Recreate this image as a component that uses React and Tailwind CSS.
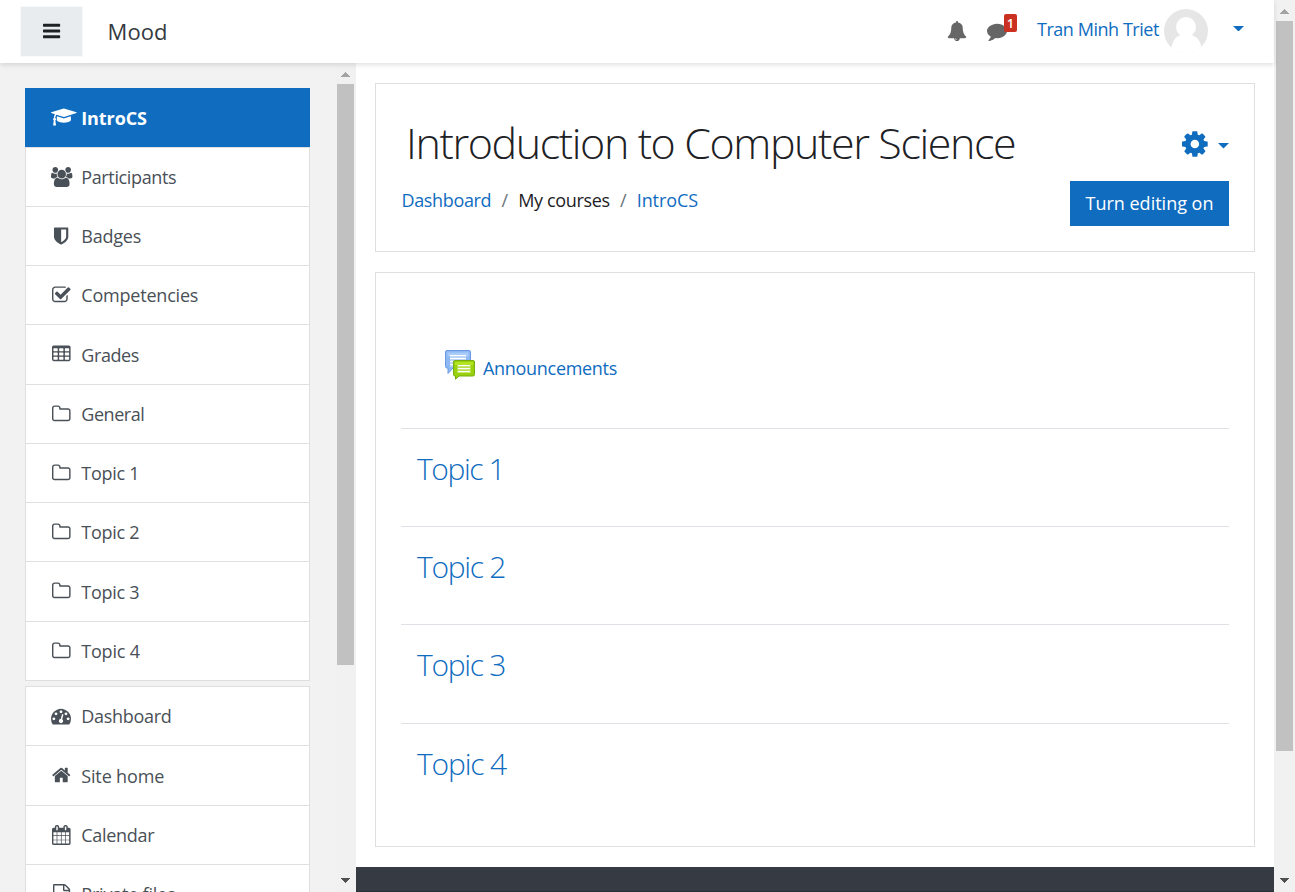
const ICONS = {
  bars: { w: 1536, d: "M1536 1344v128q0 26-19 45t-45 19h-1408q-26 0-45-19t-19-45v-128q0-26 19-45t45-19h1408q26 0 45 19t19 45zM1536 832v128q0 26-19 45t-45 19h-1408q-26 0-45-19t-19-45v-128q0-26 19-45t45-19h1408q26 0 45 19t19 45zM1536 320v128q0 26-19 45t-45 19h-1408q-26 0-45-19t-19-45v-128q0-26 19-45t45-19h1408q26 0 45 19t19 45z" },
  cap: { w: 2304, d: "M1774 836l18 316q4 69-82 128t-235 93.500-323 34.500-323-34.500-235-93.500-82-128l18-316 574 181q22 7 48 7t48-7zM2304 512q0 23-22 31l-1120 352q-4 1-10 1t-10-1l-652-206q-43 34-71 111.500t-34 178.500q63 36 63 109 0 69-58 107l58 433q2 14-8 25-9 11-24 11h-192q-15 0-24-11-10-11-8-25l58-433q-58-38-58-107 0-73 65-111 11-207 98-330l-333-104q-22-8-22-31t22-31l1120-352q4-1 10-1t10 1l1120 352q22 8 22 31z" },
  users: { w: 1920, d: "M593 896q-162 5-265 128h-134q-82 0-138-40.500t-56-118.500q0-353 124-353 6 0 43.500 21t97.500 42.500 119 21.500q67 0 133-23-5 37-5 66 0 139 81 256zM1664 1533q0 120-73 189.500t-194 69.500h-874q-121 0-194-69.500t-73-189.500q0-53 3.500-103.500t14-109 26.500-108.500 43-97.500 62-81 85.500-53.500 111.500-20q10 0 43 21.500t73 48 107 48 135 21.500 135-21.500 107-48 73-48 43-21.500q61 0 111.500 20t85.500 53.500 62 81 43 97.500 26.500 108.500 14 109 3.500 103.500zM640 256q0 106-75 181t-181 75-181-75-75-181 75-181 181-75 181 75 75 181zM1344 640q0 159-112.500 271.500t-271.500 112.500-271.500-112.500-112.500-271.500 112.500-271.500 271.500-112.500 271.500 112.500 112.500 271.500zM1920 865q0 78-56 118.500t-138 40.500h-134q-103-123-265-128 81-117 81-256 0-29-5-66 66 23 133 23 59 0 119-21.500t97.500-42.500 43.500-21q124 0 124 353zM1792 256q0 106-75 181t-181 75-181-75-75-181 75-181 181-75 181 75 75 181z" },
  shield: { w: 1280, x: 256, d: "M1344 960v-640h-448v1137q119-63 213-137 235-184 235-360zM1536 192v768q0 86-33.500 170.500t-83 150-118 127.500-126.500 103-121 77.500-89.500 49.500-42.500 20q-12 6-26 6t-26-6q-16-7-42.500-20t-89.500-49.500-121-77.500-126.500-103-118-127.500-83-150-33.500-170.500v-768q0-26 19-45t45-19h1152q26 0 45 19t19 45z" },
  check: { w: 1664, x: 64, d: "M1472 930v318q0 119-84.500 203.500t-203.500 84.500h-832q-119 0-203.500-84.500t-84.500-203.500v-832q0-119 84.500-203.500t203.500-84.500h832q63 0 117 25 15 7 18 23 3 17-9 29l-49 49q-10 10-23 10-3 0-9-2-23-6-45-6h-832q-66 0-113 47t-47 113v832q0 66 47 113t113 47h832q66 0 113-47t47-113v-254q0-13 9-22l64-64q10-10 23-10 6 0 12 3 20 8 20 29zM1703 441l-814 814q-24 24-57 24t-57-24l-430-430q-24-24-24-57t24-57l110-110q24-24 57-24t57 24l263 263 647-647q24-24 57-24t57 24l110 110q24 24 24 57t-24 57z" },
  table: { w: 1664, d: "M160 128h1344q66 0 113 47t47 113v1088q0 66-47 113t-113 47h-1344q-66 0-113-47t-47-113v-1088q0-66 47-113t113-47zM128 416v192q0 32 32 32h320q32 0 32-32v-192q0-32-32-32h-320q-32 0-32 32zM128 800v192q0 32 32 32h320q32 0 32-32v-192q0-32-32-32h-320q-32 0-32 32zM128 1184v192q0 32 32 32h320q32 0 32-32v-192q0-32-32-32h-320q-32 0-32 32zM640 416v192q0 32 32 32h320q32 0 32-32v-192q0-32-32-32h-320q-32 0-32 32zM640 800v192q0 32 32 32h320q32 0 32-32v-192q0-32-32-32h-320q-32 0-32 32zM640 1184v192q0 32 32 32h320q32 0 32-32v-192q0-32-32-32h-320q-32 0-32 32zM1152 416v192q0 32 32 32h320q32 0 32-32v-192q0-32-32-32h-320q-32 0-32 32zM1152 800v192q0 32 32 32h320q32 0 32-32v-192q0-32-32-32h-320q-32 0-32 32zM1152 1184v192q0 32 32 32h320q32 0 32-32v-192q0-32-32-32h-320q-32 0-32 32z" },
  folder: { w: 1664, x: 64, d: "M1600 1312v-704q0-40-28-68t-68-28h-704q-40 0-68-28t-28-68v-64q0-40-28-68t-68-28h-320q-40 0-68 28t-28 68v960q0 40 28 68t68 28h1216q40 0 68-28t28-68zM1728 608v704q0 92-66 158t-158 66h-1216q-92 0-158-66t-66-158v-960q0-92 66-158t158-66h320q92 0 158 66t66 158v32h672q92 0 158 66t66 158z" },
  gauge: { w: 1792, d: "M384 1152q0-53-37.500-90.500t-90.500-37.500-90.500 37.500-37.500 90.500 37.500 90.500 90.500 37.500 90.500-37.500 37.500-90.500zM576 704q0-53-37.500-90.500t-90.500-37.500-90.500 37.500-37.500 90.500 37.500 90.500 90.500 37.500 90.500-37.500 37.500-90.500zM1004 1185l101-382q6-26-7.500-48.500t-38.500-29.500-48 6.500-30 39.500l-101 382q-60 5-107 43.500t-63 98.500q-20 77 20 146t117 89 146-20 89-117q16-60-6-117t-72-91zM1664 1152q0-53-37.500-90.500t-90.500-37.500-90.500 37.500-37.500 90.500 37.500 90.500 90.500 37.500 90.500-37.500 37.500-90.500zM1024 512q0-53-37.500-90.500t-90.500-37.500-90.500 37.500-37.500 90.500 37.500 90.500 90.500 37.500 90.500-37.500 37.500-90.500zM1472 704q0-53-37.500-90.500t-90.500-37.500-90.500 37.500-37.500 90.500 37.500 90.500 90.500 37.500 90.500-37.500 37.500-90.500zM1792 1152q0 261-141 483-19 29-54 29h-1402q-35 0-54-29-141-221-141-483 0-182 71-348t191-286 286-191 348-71 348 71 286 191 191 286 71 348z" },
  home: { w: 1664, x: 64, d: "M1472 992v480q0 26-19 45t-45 19h-384v-384h-256v384h-384q-26 0-45-19t-19-45v-480q0-1 .5-3t.5-3l575-474 575 474q1 2 1 6zM1695 923l-62 74q-8 9-21 11h-3q-13 0-21-7l-692-577-692 577q-12 8-24 7-13-2-21-11l-62-74q-8-10-7-23.500t11-21.500l719-599q32-26 76-26t76 26l244 204v-195q0-14 9-23t23-9h192q14 0 23 9t9 23v408l219 182q10 8 11 21.500t-7 23.500z" },
  calendar: { w: 1664, x: 64, d: "M192 1664h288v-288h-288v288zm352 0h320v-288h-320v288zm-352-352h288v-320h-288v320zm352 0h320v-320h-320v320zm-352-384h288v-288h-288v288zm736 736h320v-288h-320v288zm-384-736h320v-288h-320v288zm768 736h288v-288h-288v288zm-384-352h320v-320h-320v320zm-352-864v-288q0-13-9.500-22.500t-22.500-9.500h-64q-13 0-22.500 9.500t-9.500 22.500v288q0 13 9.500 22.500t22.500 9.500h64q13 0 22.500-9.500t9.500-22.500zm736 864h288v-320h-288v320zm-384-384h320v-288h-320v288zm384 0h288v-288h-288v288zm32-480v-288q0-13-9.500-22.500t-22.500-9.500h-64q-13 0-22.500 9.500t-9.500 22.500v288q0 13 9.500 22.500t22.500 9.500h64q13 0 22.500-9.500t9.500-22.500zm384-64v1280q0 52-38 90t-90 38h-1408q-52 0-90-38t-38-90v-1280q0-52 38-90t90-38h128v-96q0-66 47-113t113-47h64q66 0 113 47t47 113v96h384v-96q0-66 47-113t113-47h64q66 0 113 47t47 113v96h128q52 0 90 38t38 90z" },
  file: { w: 1536, x: 128, d: "M1596 380q28 28 48 76t20 88v1152q0 40-28 68t-68 28h-1344q-40 0-68-28t-28-68v-1600q0-40 28-68t68-28h896q40 0 88 20t76 48zm-444-244v376h376q-10-29-22-41l-313-313q-12-12-41-22zm384 1528v-1024h-416q-40 0-68-28t-28-68v-416h-768v1536h1280z" },
  cog: { w: 1536, x: 128, d: "M1152 896q0-106-75-181t-181-75-181 75-75 181 75 181 181 75 181-75 75-181zm512-109v222q0 12-8 23t-20 13l-185 28q-19 54-39 91 35 50 107 138 10 12 10 25t-9 23q-27 37-99 108t-94 71q-12 0-26-9l-138-108q-44 23-91 38-16 136-29 186-7 28-36 28h-222q-14 0-24.500-8.500t-11.500-21.500l-28-184q-49-16-90-37l-141 107q-10 9-25 9-14 0-25-11-126-114-165-168-7-10-7-23 0-12 8-23 15-21 51-66.500t54-70.500q-27-50-41-99l-183-27q-13-2-21-12.500t-8-23.500v-222q0-12 8-23t19-13l186-28q14-46 39-92-40-57-107-138-10-12-10-24 0-10 9-23 26-36 98.500-107.500t94.500-71.500q13 0 26 10l138 107q44-23 91-38 16-136 29-186 7-28 36-28h222q14 0 24.500 8.500t11.500 21.500l28 184q49 16 90 37l142-107q9-9 24-9 13 0 25 10 129 119 165 170 7 8 7 22 0 12-8 23-15 21-51 66.500t-54 70.500q26 50 41 98l183 28q13 2 21 12.500t8 23.500z" },
  bell: { w: 1792, d: "M912 1696q0-16-16-16-59 0-101.500-42.500t-42.500-101.500q0-16-16-16t-16 16q0 73 51.500 124.500t124.500 51.500q16 0 16-16zm816-288q0 52-38 90t-90 38h-448q0 106-75 181t-181 75-181-75-75-181h-448q-52 0-90-38t-38-90q50-42 91-88t85-119.500 74.500-158.500 50-206 19.500-260q0-152 117-282.500t307-158.500q-8-19-8-39 0-40 28-68t68-28 68 28 28 68q0 20-8 39 190 28 307 158.500t117 282.500q0 139 19.500 260t50 206 74.500 158.500 85 119.500 91 88z" },
  comment: { w: 1792, d: "M1792 896q0 174-120 321.500t-326 233-450 85.500q-70 0-145-8-198 175-460 242-49 14-114 22-17 2-30.500-9t-17.500-29v-1q-3-4-.5-12t2-10 4.500-9.500l6-9 7-8.500 8-9q7-8 31-34.500t34.500-38 31-39.500 32.500-51 27-59 26-76q-157-89-247.500-220t-90.500-281q0-130 71-248.500t191-204.500 286-136.500 348-50.500q244 0 450 85.500t326 233 120 321.500z" },
};

function Icon({ name, className = "h-5" }) {
  const { w, x = 0, d } = ICONS[name];
  return (
    <svg viewBox={`${x} 0 ${w} 1792`} fill="currentColor" fillRule="evenodd" className={`w-auto shrink-0 overflow-visible ${className}`}>
      <path d={d} />
    </svg>
  );
}

const COURSE = [
  { icon: "users", label: "Participants", ls: "tracking-[-0.36px]" },
  { icon: "shield", label: "Badges", ls: "tracking-[-0.2px]" },
  { icon: "check", label: "Competencies", ls: "tracking-[-0.2px]" },
  { icon: "table", label: "Grades", ls: "tracking-[-0.4px]" },
  { icon: "folder", label: "General", ls: "tracking-[-0.45px]" },
  { icon: "folder", label: "Topic 1", ls: "tracking-[-0.25px]" },
  { icon: "folder", label: "Topic 2", ls: "tracking-[-0.25px]" },
  { icon: "folder", label: "Topic 3", ls: "tracking-[-0.25px]" },
  { icon: "folder", label: "Topic 4", ls: "tracking-[-0.2px]" },
];

const SITE = [
  { icon: "gauge", label: "Dashboard", ls: "tracking-[-0.3px]" },
  { icon: "home", label: "Site home", ls: "tracking-[-0.15px]" },
  { icon: "calendar", label: "Calendar", ls: "tracking-[-0.3px]" },
  { icon: "file", label: "Private files", ls: "tracking-[-0.2px]" },
];

const TOPICS = [
  { label: "Topic 1", ls: "tracking-[-1.4px]" },
  { label: "Topic 2", ls: "tracking-[-1.3px]" },
  { label: "Topic 3", ls: "tracking-[-1.3px]" },
  { label: "Topic 4", ls: "tracking-[-1.15px]" },
];

function NavItem({ icon, label, ls = "", active }) {
  return (
    <a className={`flex h-[59.25px] shrink-0 items-center border-b border-[#dfdfdf] whitespace-nowrap ${active ? "bg-[#0f6cbf] pl-[26.25px] font-bold text-white" : "border-x bg-white pl-[25.25px] text-[#495057]"}`}>
      <span className="mr-[10px] flex w-5 justify-center">
        <span className={icon === "cap" || icon === "users" ? "flex w-5 justify-start" : "flex"}>
          <Icon name={icon} />
        </span>
      </span>
      <span className={`pt-[1.300px] ${ls}`}>{label}</span>
    </a>
  );
}

function Arrow({ up, className }) {
  return (
    <svg viewBox="0 0 9 5" shapeRendering="crispEdges" className={`h-[5px] w-[9px] ${className}`}>
      <path d={up ? "M0 5L4.500 0L9 5Z" : "M0 0H9L4.500 5Z"} fill="currentColor" />
    </svg>
  );
}

function Caret({ className = "" }) {
  return (
    <svg viewBox="0 0 11 5.5" className={`h-[5.5px] w-[11px] text-[#0f6cbf] ${className}`}>
      <path d="M0 0H11L5.500 5.500Z" fill="currentColor" />
    </svg>
  );
}

function ForumIcon() {
  return (
    <svg viewBox="0 0 30 30" className="h-[30px] w-[30px]">
      <path d="M2 .5h22q1.500 0 1.500 1.500v14.500q0 1.500-1.500 1.500H8l-5 5.500V18H2Q.5 18 .5 16.500V2Q.5.500 2 .5z" fill="#8cb8f4" stroke="#6b99e4" />
      <path d="M2.500 2.500h21v4h-21z" fill="#a9ccf8" />
      <path d="M5 5h16v12H5z" fill="#bdd6f8" />
      <path d="M5 5.500h16M5 8.500h16M5 11.500h3M5 14.500h3" stroke="#fff" strokeWidth="1.200" />
      <path d="M10 10.500h18q1.500 0 1.500 1.500v12.500q0 1.500-1.500 1.500H14l-3.500 3.200V26H10q-1.500 0-1.500-1.500V12q0-1.500 1.500-1.500z" fill="#99d20c" stroke="#76ad12" />
      <path d="M10 12h18v3H10z" fill="#b2e51f" />
      <path d="M12 14.500h14v8.500H12z" fill="#b5e04b" />
      <path d="M13 15.700h12M13 18.700h12M13 21.700h12" stroke="#fff" strokeWidth="1.300" />
    </svg>
  );
}

export default function App() {
  return (
    <div className="flex h-[892px] w-[1295px] overflow-hidden bg-white text-[18px] leading-[27px] text-[#1d2125]" style={{ fontFamily: '"Open Sans", "Noto Sans", sans-serif' }}>
      <div className="flex w-[1274px] flex-col">
        <header className="relative z-10 flex h-[63px] shrink-0 items-center bg-white pr-[30px] pl-5 shadow-[0_2px_5px_rgba(0,0,0,0.12)]">
          <button className="flex h-[51px] w-[63px] items-center justify-center border border-[#f8f9fa] bg-[#e9ecef]">
            <Icon name="bars" className="mb-px h-5" />
          </button>
          <span className="ml-[24.500px] text-[22px] tracking-[0.1px] text-[#343a40]">Mood</span>
          <div className="ml-auto flex items-center">
            <Icon name="bell" className="mr-5 mb-[2px] h-5 text-[#666]" />
            <div className="relative mr-[30px] mb-[2px]">
              <Icon name="comment" className="h-5 text-[#666]" />
              <span className="absolute -top-[7px] left-[17px] flex h-[18px] w-[13px] items-center justify-center rounded-[2px] bg-[#ca3120] text-[13px] leading-[18px] font-semibold text-white">1</span>
            </div>
            <span className="relative -top-[2px] tracking-[-0.45px] text-[#0f6cbf]">Tran Minh Triet</span>
            <svg viewBox="0 0 44 44" className="relative -top-[1px] ml-[5px] h-11 w-11">
              <clipPath id="avatar">
                <circle cx="22" cy="22" r="22" />
              </clipPath>
              <g clipPath="url(#avatar)">
                <path d="M0 0h44v44H0z" fill="#e6e6e6" />
                <circle cx="22" cy="18" r="10" fill="#fff" />
                <path d="M7 44q0-14 9-18h12q10 4 10 18z" fill="#fff" />
                <path d="M0 38h44v6H0z" fill="#fff" />
              </g>
            </svg>
            <Caret className="relative -top-[3px] ml-[25px]" />
          </div>
        </header>

        <div className="flex min-h-0 flex-1">
          <aside className="flex w-[336px] shrink-0 flex-col overflow-hidden bg-[#f2f2f2] pt-[25.300px] pr-[26px] pl-[25px]">
            <nav className="flex shrink-0 flex-col">
              <NavItem icon="cap" label="IntroCS" ls="tracking-[-0.1px]" active />
              {COURSE.map((item) => (
                <NavItem key={item.label} {...item} />
              ))}
            </nav>
            <nav className="mt-[5.300px] flex shrink-0 flex-col border-t border-[#dfdfdf]">
              {SITE.map((item) => (
                <NavItem key={item.label} {...item} />
              ))}
            </nav>
          </aside>

          <div className="flex w-5 shrink-0 flex-col items-center bg-[#f1f1f1] pt-[9px] pr-[1px] pb-[9px]">
            <Arrow up className="text-[#a3a3a3]" />
            <div className="mt-[7px] h-[581px] w-[17px] bg-[#c1c1c1]" />
            <Arrow className="mt-auto text-[#505050]" />
          </div>

          <main className="flex flex-1 flex-col">
            <section className="mx-[19px] mt-5 flex h-[169px] shrink-0 justify-between border border-[#dfdfdf] pr-[25px] pl-[26px]">
              <div>
                <h1 className="mt-[30px] mb-[15px] ml-[4px] text-[43px] leading-[58px] font-light tracking-[-1.4px] whitespace-nowrap">Introduction to Computer Science</h1>
                <div className="-ml-[0.5px] flex tracking-[-0.35px] whitespace-nowrap">
                  <span className="text-[#0f6cbf]">Dashboard</span>
                  <span className="w-[27px] text-center text-[#6a737b]">/</span>
                  <span>My courses</span>
                  <span className="w-[27px] text-center text-[#6a737b]">/</span>
                  <span className="tracking-[-0.1px] text-[#0f6cbf]">IntroCS</span>
                </div>
              </div>
              <div className="flex flex-col items-end pt-[45px]">
                <div className="flex items-center gap-[10px] text-[#0f6cbf]">
                  <Icon name="cog" className="h-[30px]" />
                  <Caret className="relative top-[2px]" />
                </div>
                <button className="mt-[22px] h-[45px] w-[159px] bg-[#0f6cbf] whitespace-nowrap text-white">Turn editing on</button>
              </div>
            </section>

            <section className="mx-[19px] mt-5 flex h-[575px] shrink-0 flex-col border border-[#dfdfdf] px-[25px]">
              <div className="flex h-[155px] shrink-0 pt-[77px] pl-[44px]">
                <ForumIcon />
                <a className="mt-[5px] ml-2 tracking-[-0.3px] text-[#0f6cbf]">Announcements</a>
              </div>
              {TOPICS.map((t) => (
                <div key={t.label} className="h-[98.2px] shrink-0 border-t border-[#dee2e6] pt-[20px] pl-4">
                  <h3 className={`text-[30px] leading-[40px] font-light text-[#0f6cbf] ${t.ls}`}>{t.label}</h3>
                </div>
              ))}
            </section>

            <footer className="mt-5 flex-1 border-b border-[#2d3135] bg-[#363a43]" />
          </main>
        </div>
      </div>

      <div className="flex w-[21px] flex-col items-center bg-[#f1f1f1] py-[9px]">
        <Arrow up className="text-[#a3a3a3]" />
        <div className="mt-[7px] h-[730px] w-[17px] bg-[#c1c1c1]" />
        <Arrow className="mt-auto text-[#505050]" />
      </div>
    </div>
  );
}
